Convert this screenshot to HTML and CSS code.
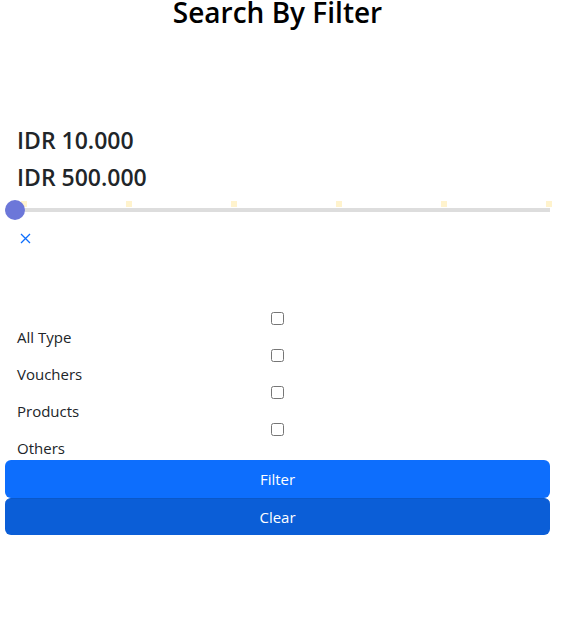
FILE: index.html
```html
<!DOCTYPE html>
<html lang="en">
<head>
<meta charset="utf-8">
<title>Search By Filter</title>
<link rel="stylesheet" href="styles.css">
</head>
<body>
<div class="page">
  <h2 class="title">Search By Filter</h2>

  <div class="prices">
    <div class="price">IDR 10.000</div>
    <div class="price">IDR 500.000</div>
  </div>

  <div class="slider">
    <div class="dots">
      <span class="dot"></span><span class="dot"></span><span class="dot"></span><span class="dot"></span><span class="dot"></span><span class="dot"></span>
    </div>
    <div class="track"></div>
    <span class="thumb"></span>
  </div>

  <button class="clear-x" type="button" aria-label="Reset">
    <svg width="11" height="11" viewBox="0 0 11 11"><path d="M1 1 L10 10 M10 1 L1 10" stroke="#0d6efd" stroke-width="1.3" fill="none"/></svg>
  </button>

  <div class="types">
    <div class="type"><input type="checkbox" id="t1"><label for="t1">All Type</label></div>
    <div class="type"><input type="checkbox" id="t2"><label for="t2">Vouchers</label></div>
    <div class="type"><input type="checkbox" id="t3"><label for="t3">Products</label></div>
    <div class="type"><input type="checkbox" id="t4"><label for="t4">Others</label></div>
  </div>

  <div class="actions">
    <button class="btn btn-filter" type="button">Filter</button>
    <button class="btn btn-clear" type="button">Clear</button>
  </div>
</div>
</body>
</html>
```

FILE: styles.css
```css
* { box-sizing: border-box; }
html, body { margin: 0; padding: 0; background: #fff; }
body {
  font-family: "Open Sans", "Noto Sans", "Liberation Sans", sans-serif;
  color: #212529;
  font-size: 16px;
}
.page {
  width: 545px;
  margin-left: 5px;
}
.title {
  margin: 0;
  font-size: 28px;
  font-weight: 600;
  line-height: 24px;
  text-align: center;
  color: #000;
}
.prices {
  margin-top: 98px;
  padding-left: 12px;
}
.price {
  font-size: 23px;
  font-weight: 600;
  line-height: 37px;
  color: #212529;
}
.slider {
  position: relative;
  height: 20px;
  margin-top: 4px;
  display: flex;
  align-items: center;
}
.track {
  width: 100%;
  height: 4px;
  background: #dddddd;
}
.dots {
  position: absolute;
  left: 16px;
  top: 1px;
  display: flex;
  gap: 99px;
}
.dot {
  width: 6px;
  height: 6px;
  background: #fff3cd;
}
.thumb {
  position: absolute;
  left: 0;
  top: 0;
  width: 20px;
  height: 20px;
  border-radius: 50%;
  background: #6c77d9;
}
.clear-x {
  display: block;
  margin: 13px 0 0 15px;
  padding: 0;
  border: 0;
  background: none;
  width: 11px;
  height: 11px;
  line-height: 0;
}
.types {
  margin-top: 68px;
}
.type {
  display: flex;
  flex-direction: column;
}
.type input {
  width: 13px;
  height: 13px;
  margin: 0 auto;
  align-self: center;
}
.type label {
  padding-left: 12px;
  line-height: 24px;
  font-size: 15px;
  color: #212529;
}
.actions {
  display: flex;
  flex-direction: column;
}
.btn {
  height: 38px;
  border: 0;
  border-radius: 6px;
  color: #fff;
  font-family: inherit;
  font-size: 15px;
  width: 100%;
}
.btn-filter { background: #0d6efd; height: 38px; }
.btn-clear { background: #0b5ed7; height: 37px; border-top: 1px solid #0a58ca; }
```
